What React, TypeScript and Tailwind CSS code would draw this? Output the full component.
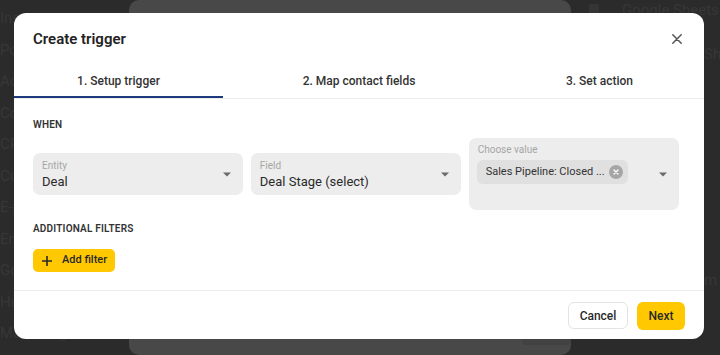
import React from "react";

const sideItems = ["Inspector", "Postgres", "Activity", "Contacts", "CRM", "Customer", "E-mail", "Emails", "Google", "HubSpot", "Marketing automation"];

function Caret() {
  return (
    <svg width="8" height="5" viewBox="0 0 8 5" className="shrink-0">
      <path d="M0 0.5 L8 0.5 L4 4.5 Z" fill="#6b6b6b" />
    </svg>
  );
}

function SelectBox({ label, value }: { label: string; value: string }) {
  return (
    <div className="flex h-[42px] items-center rounded-[7px] bg-[#ededed] pl-[9px] pr-[12px]">
      <div className="flex flex-1 flex-col">
        <span className="text-[10px] leading-[12px] text-[#a6a6a6]">{label}</span>
        <span className="mt-[2px] text-[13px] leading-[15px] text-[#2a2a2a]">{value}</span>
      </div>
      <Caret />
    </div>
  );
}

export default function App() {
  return (
    <div
      className="relative h-[355px] w-[720px] overflow-hidden bg-[#2b2b2b]"
      style={{ fontFamily: "Roboto, 'Noto Sans', sans-serif" }}
    >
      {/* background app */}
      <div className="flex h-full">
        <div className="flex w-[129px] flex-col pt-[8px] text-[15px] leading-[20px] text-[#373737]">
          {sideItems.map((s) => (
            <div key={s} className="h-[32.4px] whitespace-nowrap">{s}</div>
          ))}
        </div>
        <div className="flex w-[460px] flex-col justify-end rounded-[10px] bg-[#484848]">
          <div className="mb-[10px] ml-[393px] h-[6px] w-[49px] rounded-b-[4px] bg-[#424242]" />
        </div>
        <div className="flex flex-1 flex-col pl-[18px] text-[15px] leading-[20px] text-[#373737]">
          <div className="flex items-center gap-[23px] whitespace-nowrap">
            <span className="h-[12px] w-[10px] rounded-[2px] bg-[#353535]" />
            <span>Google Sheets</span>
          </div>
          <div className="mt-[24px] whitespace-nowrap pl-[115px]">Sheets</div>
          <div className="mt-[206px] whitespace-nowrap pl-[115px]">m Form</div>
        </div>
      </div>

      {/* modal */}
      <div className="absolute left-[14px] top-[13px] flex h-[326px] w-[690px] flex-col rounded-[12px] bg-white text-[#2a2a2a]">
        <div className="flex h-[49px] items-center justify-between pl-[19px] pr-[22px] pt-[2px]">
          <h1 className="text-[15px] font-semibold leading-[20px] text-[#222]">Create trigger</h1>
          <svg width="10" height="10" viewBox="0 0 10 10">
            <path d="M0.8 0.8 L9.2 9.2 M9.2 0.8 L0.8 9.2" stroke="#555" strokeWidth="1.5" strokeLinecap="round" />
          </svg>
        </div>
        <div className="flex h-[37px] justify-between border-b border-[#ececec]">
          <div className="flex w-[209px] items-center justify-center border-b-2 border-[#1d3a7e] pt-[3px] text-[12px] font-medium text-[#333]">
            1. Setup trigger
          </div>
          <div className="flex w-[209px] items-center justify-center pt-[1px] text-[12px] font-medium text-[#333]">
            2. Map contact fields
          </div>
          <div className="flex w-[209px] items-center justify-center pt-[1px] text-[12px] font-medium text-[#333]">
            3. Set action
          </div>
        </div>
        <div className="flex flex-1 flex-col pl-[19px] pr-[25px] pt-[20px]">
          <div className="text-[10px] font-semibold uppercase leading-[12px] tracking-[0.2px] text-[#333]">When</div>
          <div className="mt-[7px] grid grid-cols-3 items-center gap-[7.5px]">
            <SelectBox label="Entity" value="Deal" />
            <SelectBox label="Field" value="Deal Stage (select)" />
            <div className="flex h-[72px] items-center rounded-[7px] bg-[#ededed] pl-[8px] pr-[12px]">
              <div className="flex flex-1 flex-col self-start pt-[6px]">
                <span className="pl-[1px] text-[10px] leading-[12px] text-[#a6a6a6]">Choose value</span>
                <div className="mt-[4px] flex h-[24px] w-[151px] items-center justify-between rounded-[6px] bg-[#e0e0e0] pl-[9px] pr-[5px]">
                  <span className="whitespace-nowrap text-[11px] text-[#333]">Sales Pipeline: Closed ...</span>
                  <span className="flex h-[14px] w-[14px] items-center justify-center rounded-full bg-[#a6a6a6]">
                    <svg width="6" height="6" viewBox="0 0 6 6">
                      <path d="M1 1 L5 5 M5 1 L1 5" stroke="#fff" strokeWidth="1.3" strokeLinecap="round" />
                    </svg>
                  </span>
                </div>
              </div>
              <Caret />
            </div>
          </div>
          <div className="mt-[13px] text-[10px] font-semibold uppercase leading-[12px] tracking-[0.2px] text-[#333]">
            Additional filters
          </div>
          <div className="mt-[14px]">
            <button className="flex h-[23px] w-[82px] items-center gap-[10px] whitespace-nowrap rounded-[5px] bg-[#ffc800] pl-[9px] text-[11px] font-medium text-[#2a2a2a]">
              <svg width="10" height="10" viewBox="0 0 10 10">
                <path d="M5 0 V10 M0 5 H10" stroke="#2a2a2a" strokeWidth="1.6" />
              </svg>
              Add filter
            </button>
          </div>
        </div>
        <div className="flex h-[49px] items-center justify-end gap-[9px] border-t border-[#ededed] pr-[19px] pt-[1px]">
          <button className="h-[27px] w-[60px] rounded-[6px] border border-[#e3e3e3] bg-white text-[12px] font-medium text-[#2a2a2a]">
            Cancel
          </button>
          <button className="h-[28px] w-[48px] rounded-[6px] bg-[#ffc800] text-[12px] font-medium text-[#2a2a2a]">
            Next
          </button>
        </div>
      </div>
    </div>
  );
}
